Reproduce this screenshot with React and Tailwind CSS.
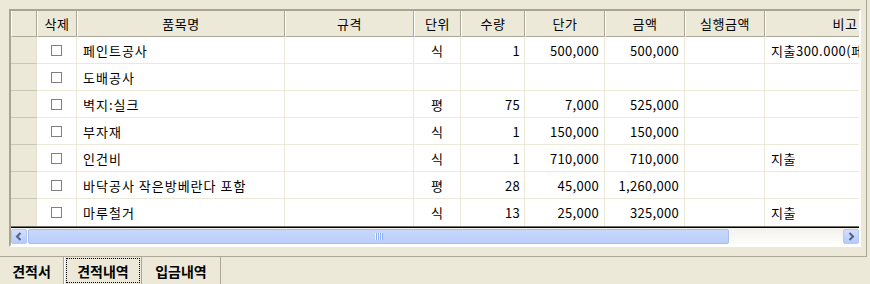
import React from "react";

const cols = [26, 40, 208, 129, 47, 64, 80, 80, 80, 160];
const heads = ["", "삭제", "품목명", "규격", "단위", "수량", "단가", "금액", "실행금액", "비고"];
const rows = [
  ["페인트공사", "", "식", "1", "500,000", "500,000", "", "지출300.000(페인트)"],
  ["도배공사", "", "", "", "", "", "", ""],
  ["벽지:실크", "", "평", "75", "7,000", "525,000", "", ""],
  ["부자재", "", "식", "1", "150,000", "150,000", "", ""],
  ["인건비", "", "식", "1", "710,000", "710,000", "", "지출"],
  ["바닥공사 작은방베란다 포함", "", "평", "28", "45,000", "1,260,000", "", ""],
  ["마루철거", "", "식", "13", "25,000", "325,000", "", "지출"],
];
const aligns = [
  "justify-start pl-[6px] tracking-[1px]",
  "justify-start pl-[6px]",
  "justify-center",
  "justify-end pr-[4px] tracking-[0.3px]",
  "justify-end pr-[5px] tracking-[0.3px]",
  "justify-end pr-[5px] tracking-[0.3px]",
  "justify-end pr-[5px]",
  "justify-start pl-[6px] tracking-[0.5px]",
];

const font = { fontFamily: '"Noto Sans CJK KR", "Noto Sans", sans-serif' };

function Chevron({ dir }) {
  return (
    <svg width="8" height="9" viewBox="0 0 8 9">
      {dir === "left" ? (
        <path d="M5.5 1 L2 4.5 L5.5 8" stroke="#4D6185" strokeWidth="2" fill="none" />
      ) : (
        <path d="M2.5 1 L6 4.5 L2.5 8" stroke="#4D6185" strokeWidth="2" fill="none" />
      )}
    </svg>
  );
}

export default function App() {
  return (
    <div className="w-[870px] h-[284px] bg-[#ECE9D8] overflow-hidden text-[13px] text-black" style={font}>
      <div className="w-[867px] h-[257px] border-r border-b border-[#ACA899] pl-[9px] pt-[9px]">
        <div className="w-[852px] h-[238px] border-t-2 border-l-2 border-t-[#A7A492] border-l-[#A7A492] border-r-2 border-b-2 border-r-white border-b-white flex flex-col bg-white">
          <div className="w-[848px] overflow-hidden flex flex-col">
            <div className="flex h-[26px] shrink-0">
              {cols.map((w, i) => (
                <div
                  key={i}
                  style={{ width: w }}
                  className="shrink-0 h-[26px] bg-[#ECE9D8] border-r border-b border-[#ACA899] border-l border-l-white flex items-center justify-center leading-none tracking-[0.5px] whitespace-nowrap"
                >
                  {heads[i]}
                </div>
              ))}
            </div>
            {rows.map((r, ri) => {
              const last = ri === rows.length - 1;
              return (
                <div key={ri} className="flex h-[27px] shrink-0">
                  <div className={`shrink-0 w-[26px] h-[27px] bg-[#ECE9D8] border-r border-[#E4E1D0] ${last ? "" : "border-b border-b-[#C9C6B6]"}`} />
                  <div className={`shrink-0 w-[40px] h-[27px] border-r border-[#ECE9D8] flex items-center justify-center ${last ? "" : "border-b"}`}>
                    <div className="w-[11px] h-[11px] border border-[#808080] bg-white" />
                  </div>
                  {r.map((c, ci) => (
                    <div
                      key={ci}
                      style={{ width: cols[ci + 2] }}
                      className={`shrink-0 h-[27px] border-r border-[#ECE9D8] flex items-center whitespace-nowrap overflow-hidden leading-none ${last ? "" : "border-b"} ${aligns[ci]}`}
                    >
                      {c}
                    </div>
                  ))}
                </div>
              );
            })}
            <div className="h-[1px] bg-[#716F64] shrink-0" />
            <div className="h-[1px] bg-black shrink-0" />
            <div className="h-[17px] shrink-0 flex items-center bg-gradient-to-b from-[#F3F1EC] to-[#FEFEFB]">
              <div className="w-[16px] h-[15px] rounded-[2px] border border-[#B4C8F6] bg-gradient-to-b from-[#D2DEFD] to-[#B7CAF7] flex items-center justify-center">
                <Chevron dir="left" />
              </div>
              <div className="ml-[1px] w-[701px] h-[15px] rounded-[2px] border border-[#A9BEEC] bg-gradient-to-b from-[#C9D8FC] to-[#BACEF8] flex items-center justify-center">
                <div className="flex gap-[1px]">
                  {[0, 1, 2, 3].map((k) => (
                    <div key={k} className="w-[1px] h-[7px] bg-[#EEF4FE] shadow-[1px_0_0_#8CB0F8]" />
                  ))}
                </div>
              </div>
              <div className="flex-1" />
              <div className="w-[16px] h-[15px] rounded-[2px] border border-[#B4C8F6] bg-gradient-to-b from-[#D2DEFD] to-[#B7CAF7] flex items-center justify-center">
                <Chevron dir="right" />
              </div>
            </div>
          </div>
        </div>
      </div>
      <div className="flex h-[27px] font-bold text-[14px]">
        <div className="w-[64px] h-[27px] border-r border-[#ACA899] flex items-center justify-center leading-none">견적서</div>
        <div className="w-[78px] h-[27px] border-l border-l-white border-r border-[#ACA899] p-[1px]">
          <div className="w-full h-full border border-dotted border-black flex items-center justify-center leading-none">견적내역</div>
        </div>
        <div className="w-[79px] h-[27px] border-r border-[#ACA899] flex items-center justify-center leading-none">입금내역</div>
      </div>
    </div>
  );
}
